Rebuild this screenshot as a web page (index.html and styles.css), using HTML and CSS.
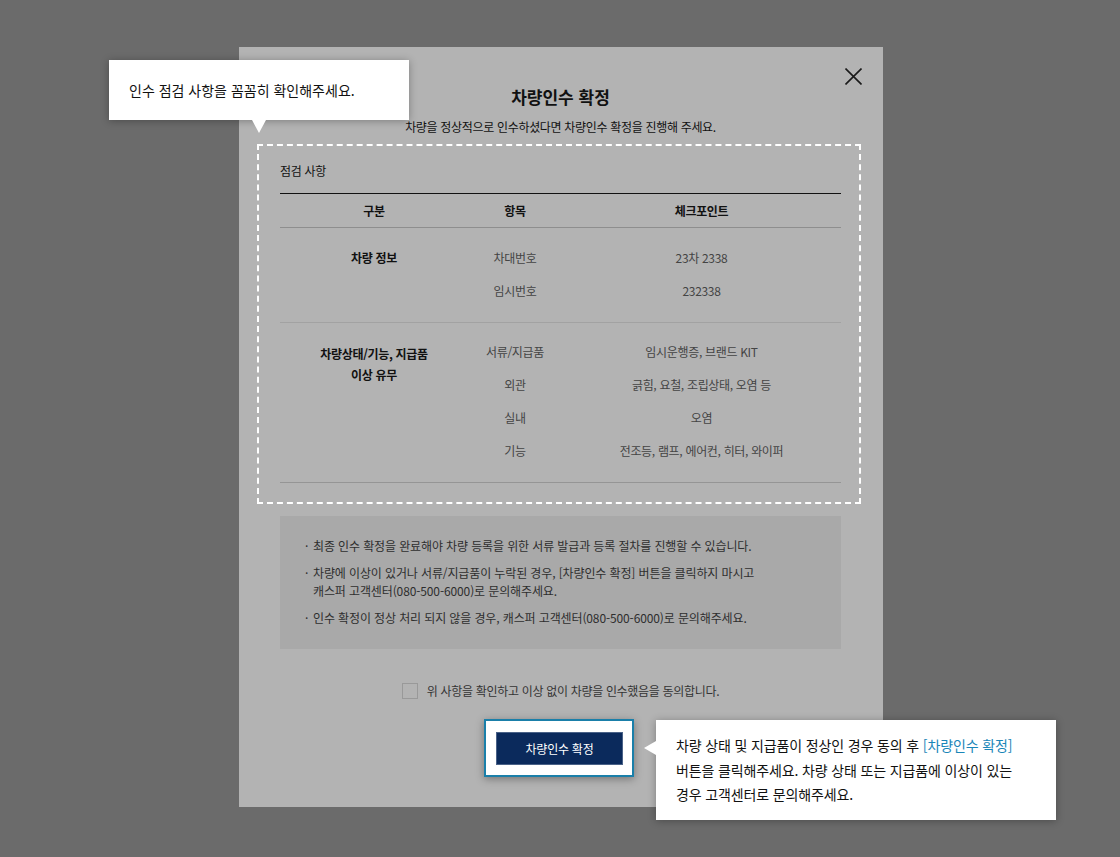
FILE: index.html
```html
<!DOCTYPE html>
<html lang="ko">
<head>
    <meta charset="UTF-8">
    <meta name="viewport" content="width=device-width, initial-scale=1.0">
    <title>차량인수 확정</title>
    <link rel="stylesheet" href="styles.css">
</head>
<body>

<div class="page">
    <div class="modal">
        <button class="modal-close" type="button" aria-label="닫기">
            <svg width="17" height="17" viewBox="0 0 17 17">
                <path d="M0.5 0.5 L16.5 16.5 M16.5 0.5 L0.5 16.5" stroke="#1a1a1a" stroke-width="1.6" fill="none"/>
            </svg>
        </button>

        <h2 class="modal-title">차량인수 확정</h2>
        <p class="modal-desc">차량을 정상적으로 인수하셨다면 차량인수 확정을 진행해 주세요.</p>

        <div class="check-area">
            <p class="check-caption">점검 사항</p>
            <table class="check-table">
                <colgroup>
                    <col class="col-cat">
                    <col class="col-item">
                    <col>
                </colgroup>
                <thead>
                    <tr>
                        <th>구분</th>
                        <th>항목</th>
                        <th>체크포인트</th>
                    </tr>
                </thead>
                <tbody>
                    <tr>
                        <td class="cat" rowspan="2">차량 정보</td>
                        <td>차대번호</td>
                        <td>23차 2338</td>
                    </tr>
                    <tr>
                        <td>임시번호</td>
                        <td>232338</td>
                    </tr>
                </tbody>
                <tbody>
                    <tr>
                        <td class="cat cat-multi" rowspan="4">차량상태/기능, 지급품<br>이상 유무</td>
                        <td>서류/지급품</td>
                        <td>임시운행증, 브랜드 KIT</td>
                    </tr>
                    <tr>
                        <td>외관</td>
                        <td>긁힘, 요철, 조립상태, 오염 등</td>
                    </tr>
                    <tr>
                        <td>실내</td>
                        <td>오염</td>
                    </tr>
                    <tr>
                        <td>기능</td>
                        <td>전조등, 램프, 에어컨, 히터, 와이퍼</td>
                    </tr>
                </tbody>
            </table>
        </div>

        <ul class="notice">
            <li>최종 인수 확정을 완료해야 차량 등록을 위한 서류 발급과 등록 절차를 진행할 수 있습니다.</li>
            <li>차량에 이상이 있거나 서류/지급품이 누락된 경우, [차량인수 확정] 버튼을 클릭하지 마시고<br>캐스퍼 고객센터(080-500-6000)로 문의해주세요.</li>
            <li>인수 확정이 정상 처리 되지 않을 경우, 캐스퍼 고객센터(080-500-6000)로 문의해주세요.</li>
        </ul>

        <label class="agree">
            <span class="agree-box"></span>
            위 사항을 확인하고 이상 없이 차량을 인수했음을 동의합니다.
        </label>

        <div class="confirm">
            <div class="confirm-frame">
                <button class="btn-confirm" type="button">차량인수 확정</button>
            </div>
        </div>
    </div>

    <div class="coach-tip tip-top">인수 점검 사항을 꼼꼼히 확인해주세요.</div>
    <div class="coach-tip tip-right">
        차량 상태 및 지급품이 정상인 경우 동의 후 <span class="hl">[차량인수 확정]</span><br>
        버튼을 클릭해주세요. 차량 상태 또는 지급품에 이상이 있는<br>
        경우 고객센터로 문의해주세요.
    </div>
</div>

</body>
</html>
```

FILE: styles.css
```css
body {
    margin: 0;
    background-color: #6b6b6b;
    font-family: "Noto Sans CJK KR", "Noto Sans", sans-serif;
    color: #111;
    letter-spacing: -0.02em;
}
.page {
    position: relative;
    width: 1120px;
    height: 857px;
    padding-top: 47px;
    box-sizing: border-box;
}
.modal {
    position: relative;
    width: 644px;
    height: 760px;
    margin-left: 239px;
    padding: 38px 42px 0 41px;
    box-sizing: border-box;
    background-color: #b3b3b3;
}
.modal-close {
    position: absolute;
    top: 21px;
    right: 21px;
    width: 17px;
    height: 17px;
    padding: 0;
    border: none;
    background: none;
    cursor: pointer;
}
.modal-close svg {
    display: block;
}
.modal-title {
    margin: 0;
    font-size: 17px;
    line-height: 24px;
    font-weight: bold;
    text-align: center;
    letter-spacing: 0;
}
.modal-desc {
    margin: 9px 0 0;
    font-size: 12px;
    line-height: 18px;
    text-align: center;
}
.check-area {
    margin: 8px -20px 0 -23px;
    padding: 16px 18px 19px 21px;
    border: 2px dashed #fff;
}
.check-caption {
    margin: 0 0 13px;
    font-size: 12px;
    line-height: 18px;
}
.check-table {
    width: 100%;
    table-layout: fixed;
    border-collapse: collapse;
    border-top: 1px solid #111;
    font-size: 12px;
}
.col-cat {
    width: 188px;
}
.col-item {
    width: 94px;
}
.check-table th {
    height: 33px;
    padding: 0;
    font-weight: bold;
    border-bottom: 1px solid #8e8e8e;
}
.check-table tbody {
    border-bottom: 1px solid #a2a2a2;
}
.check-table tbody:last-child {
    border-bottom-color: #959595;
}
.check-table td {
    padding: 8px 0 7px;
    line-height: 18px;
    text-align: center;
    color: #444;
}
.check-table tbody tr:first-child td {
    padding-top: 21px;
}
.check-table tbody:last-child tr:first-child td {
    padding-top: 20px;
}
.check-table tbody tr:last-child td {
    padding-bottom: 22px;
}
.check-table td.cat {
    vertical-align: top;
    font-weight: bold;
    color: #111;
}
.check-table td.cat-multi {
    line-height: 21px;
    padding-top: 18px;
}
.notice {
    margin: 12px 0 0;
    padding: 12px 20px 22px 33px;
    list-style: none;
    background-color: #a9a9a9;
    font-size: 12px;
    line-height: 18px;
    color: #2e2e2e;
    letter-spacing: -0.01em;
}
.notice li {
    position: relative;
    margin-top: 9px;
}
.notice li::before {
    content: "·";
    position: absolute;
    left: -8px;
    top: 0;
}
.agree {
    display: flex;
    justify-content: center;
    align-items: center;
    gap: 9px;
    margin-top: 34px;
    font-size: 12px;
    line-height: 16px;
    color: #333;
}
.agree-box {
    width: 14px;
    height: 14px;
    border: 1px solid #999;
}
.confirm {
    display: flex;
    justify-content: center;
    margin-top: 20px;
    padding-right: 3px;
}
.confirm-frame {
    padding: 11px 9px 10px 10px;
    border: 2px solid #1a7fa9;
    background-color: #fff;
    box-shadow: 0 2px 8px rgba(0, 0, 0, 0.35);
}
.btn-confirm {
    display: block;
    width: 127px;
    height: 33px;
    padding: 0;
    border: 1px solid #4a6288;
    background-color: #0b2a5c;
    color: #fff;
    font-family: inherit;
    font-size: 12px;
    letter-spacing: -0.02em;
    cursor: pointer;
}
.coach-tip {
    position: absolute;
    box-sizing: border-box;
    background-color: #fff;
    color: #111;
    box-shadow: 0 1px 8px rgba(0, 0, 0, 0.3);
}
.tip-top {
    left: 109px;
    top: 60px;
    width: 300px;
    height: 60px;
    padding: 0 20px;
    display: flex;
    align-items: center;
    font-size: 14px;
    letter-spacing: 0;
}
.tip-top::after {
    content: "";
    position: absolute;
    left: 143px;
    top: 100%;
    border-left: 7px solid transparent;
    border-right: 7px solid transparent;
    border-top: 13px solid #fff;
}
.tip-right {
    left: 656px;
    top: 720px;
    width: 400px;
    height: 100px;
    padding: 13px 20px;
    font-size: 14px;
    line-height: 24.5px;
    letter-spacing: -0.01em;
}
.tip-right::before {
    content: "";
    position: absolute;
    left: -12px;
    top: 21px;
    border-top: 7px solid transparent;
    border-bottom: 7px solid transparent;
    border-right: 12px solid #fff;
}
.hl {
    color: #1a86b8;
}
```
